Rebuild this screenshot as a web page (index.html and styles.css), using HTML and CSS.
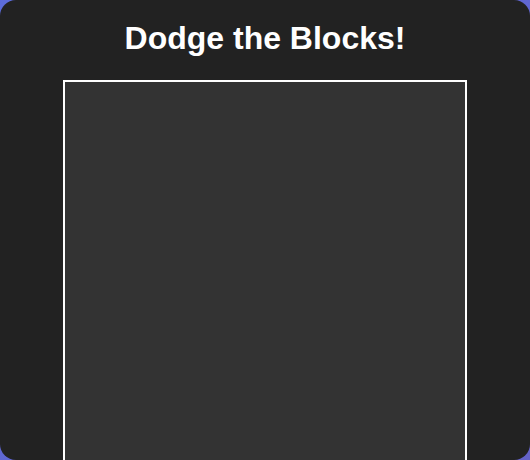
FILE: index.html
```html
<!DOCTYPE html>
<html lang="en">
<head>
<meta charset="utf-8">
<title>Dodge the Blocks!</title>
<link rel="stylesheet" href="styles.css">
</head>
<body>
  <main class="game">
    <h1 class="title">Dodge the Blocks!</h1>
    <div class="board"></div>
  </main>
</body>
</html>
```
FILE: styles.css
```css
html, body {
  margin: 0;
  padding: 0;
  height: 100%;
}
body {
  background: linear-gradient(135deg, #5c6cdb 0%, #6462c8 100%);
  font-family: "Liberation Sans", Arial, sans-serif;
  overflow: hidden;
}
.game {
  box-sizing: border-box;
  height: 460px;
  width: 530px;
  background: #222222;
  border-radius: 16px;
  overflow: hidden;
  padding-top: 20px;
  display: flex;
  flex-direction: column;
  align-items: center;
}
.title {
  margin: 0 0 23px;
  color: #ffffff;
  font-size: 32px;
  font-weight: bold;
  line-height: 37px;
}
.board {
  flex: none;
  width: 400px;
  height: 400px;
  background: #333333;
  border: 2px solid #ffffff;
}
```
